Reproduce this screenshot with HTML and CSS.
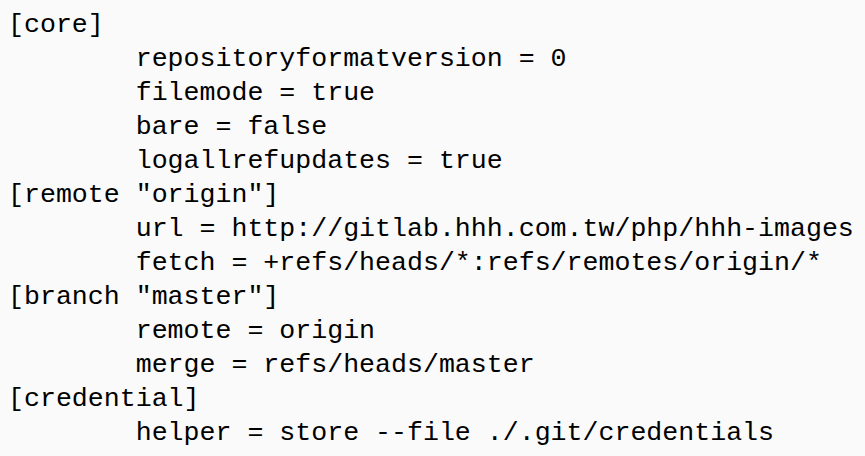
FILE: index.html
```html
<!DOCTYPE html>
<html>
<head>
<meta charset="utf-8">
<link rel="stylesheet" href="styles.css">
</head>
<body>
<pre class="config">[core]
	repositoryformatversion = 0
	filemode = true
	bare = false
	logallrefupdates = true
[remote "origin"]
	url = http://gitlab.hhh.com.tw/php/hhh-images
	fetch = +refs/heads/*:refs/remotes/origin/*
[branch "master"]
	remote = origin
	merge = refs/heads/master
[credential]
	helper = store --file ./.git/credentials</pre>
</body>
</html>
```
FILE: styles.css
```css
html, body {
  margin: 0;
  padding: 0;
  background: #fafafa;
}
.config {
  margin: 0;
  padding: 8px 0 0 8px;
  font-family: "Liberation Mono", "DejaVu Sans Mono", monospace;
  font-size: 26.6px;
  line-height: 34px;
  tab-size: 8;
  color: #000;
}
```
